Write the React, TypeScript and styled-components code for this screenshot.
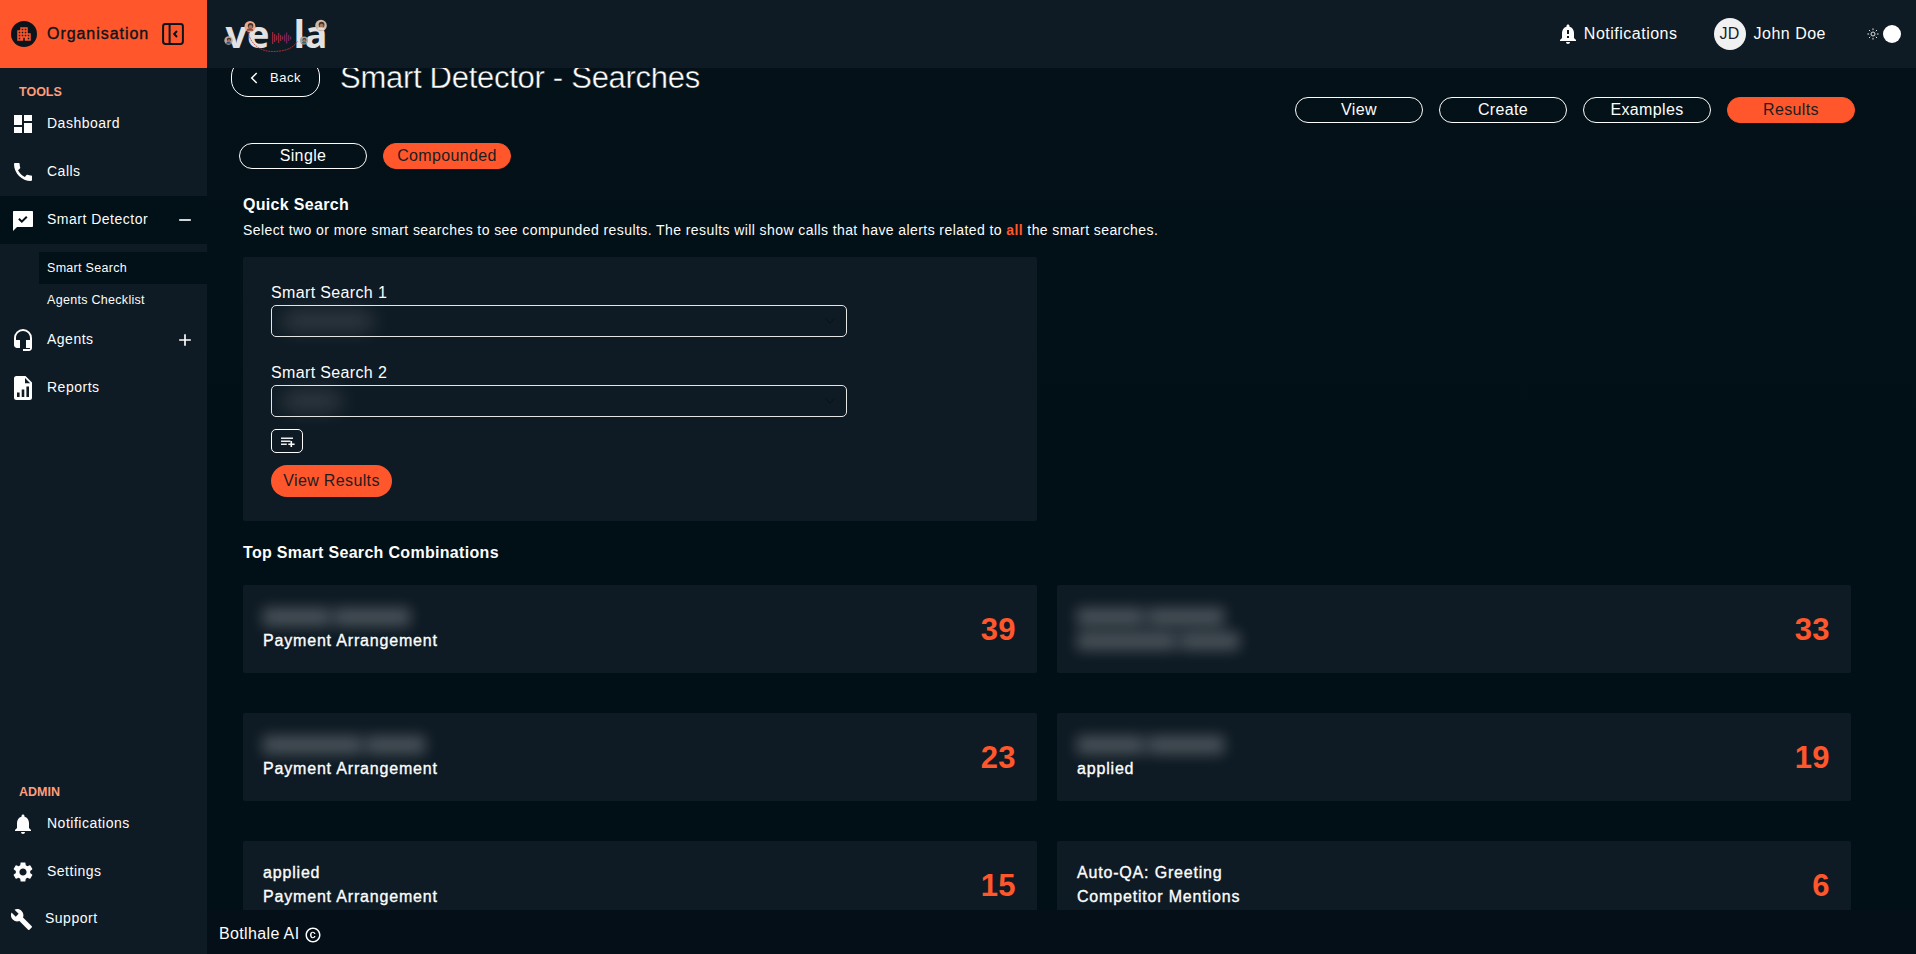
import React from "react";
import styled, { createGlobalStyle } from "styled-components";
import {
  MdAdd,
  MdApartment,
  MdBuild,
  MdCall,
  MdCopyright,
  MdDashboard,
  MdHeadsetMic,
  MdNotificationImportant,
  MdNotifications,
  MdRemove,
  MdSettings,
} from "react-icons/md";

const c = {
  accent: "#ff572b",
  accentSoft: "#ff9d7c",
  page: "#021017",
  panel: "#0f1b24",
  white: "#fdfdfd",
};

const GlobalStyle = createGlobalStyle`
  *, *::before, *::after { box-sizing: border-box; }
  body {
    margin: 0;
    background: ${c.page};
    color: ${c.white};
    font-family: "Liberation Sans", Arial, sans-serif;
    font-size: 16px;
    letter-spacing: 0.36px;
    line-height: 24px;
    overflow: hidden;
  }
  h1, h2, p { margin: 0; }
  button { font: inherit; letter-spacing: inherit; color: inherit; padding: 0; }
  svg { display: block; flex: none; }
`;

const Shell = styled.div`
  display: grid;
  grid-template-columns: 207px 1fr;
  height: 954px;
  overflow: hidden;
`;

const Sidebar = styled.aside`
  display: flex;
  flex-direction: column;
  background: ${c.panel};
  font-size: 14px;
  letter-spacing: 0.5px;
`;

const OrgBar = styled.div`
  display: flex;
  align-items: center;
  height: 68px;
  flex: none;
  padding: 0 23px 1px 11px;
  background: ${c.accent};
  color: #0b141b;
`;

const OrgBadge = styled.span`
  display: grid;
  place-items: center;
  width: 26px;
  height: 26px;
  border-radius: 50%;
  background: #0b141b;
  color: ${c.accent};
`;

const OrgName = styled.span`
  flex: 1;
  padding-left: 10px;
  font-size: 16px;
  letter-spacing: 0.95px;
  -webkit-text-stroke: 0.35px currentColor;
`;

const GroupLabel = styled.div`
  height: 32px;
  padding: 13px 0 0 19px;
  color: ${c.accentSoft};
  font-size: 12.5px;
  font-weight: 700;
  line-height: 23px;
  letter-spacing: 0;
`;

const NavItem = styled.div<{ $active?: boolean }>`
  display: flex;
  align-items: center;
  gap: 12px;
  height: 48px;
  flex: none;
  padding: 0 12px 0 11px;
  background: ${(p) => (p.$active ? c.page : "transparent")};
`;

const SupportItem = styled(NavItem)`
  height: 46px;
  padding-left: 10px;
`;

const NavLabel = styled.span`
  flex: 1;
  padding-bottom: 2px;
`;

const SubNav = styled.div`
  padding: 8px 0 0 39px;
`;

const SubItem = styled.div<{ $active?: boolean }>`
  height: 32px;
  padding-left: 8px;
  font-size: 12.5px;
  line-height: 33px;
  letter-spacing: 0.3px;
  background: ${(p) => (p.$active ? c.page : "transparent")};
`;

const Spacer = styled.div`
  flex: 1;
`;

const AdminGroup = styled.div`
  height: 186px;
`;

const Content = styled.div`
  display: flex;
  flex-direction: column;
  min-width: 0;
  height: 954px;
`;

const TopBar = styled.header`
  display: flex;
  align-items: center;
  height: 68px;
  flex: none;
  padding: 0 15px 0 15px;
  background: ${c.panel};
`;

const TopGroup = styled.div<{ $gap: number; $right: number }>`
  display: flex;
  align-items: center;
  gap: ${(p) => p.$gap}px;
  margin-right: ${(p) => p.$right}px;
  letter-spacing: 0.5px;
`;

const TopText = styled.span`
  padding-bottom: 1px;
`;

const Avatar = styled.span`
  display: grid;
  place-items: center;
  width: 32px;
  height: 32px;
  border-radius: 50%;
  background: #f1f1f1;
  color: #16222b;
  letter-spacing: 0.3px;
`;

const ToggleKnob = styled.span`
  width: 18px;
  height: 18px;
  border-radius: 50%;
  background: #fff;
`;

const Scroller = styled.main`
  height: 842px;
  overflow: hidden;
  background: linear-gradient(#041118, #001016 55%, #001016);
`;

const Page = styled.div`
  margin-top: -9px;
  padding-left: 36px;
  padding-right: 65px;
`;

const TitleRow = styled.div`
  display: flex;
  align-items: center;
  gap: 20px;
  height: 38px;
  margin-left: -12px;
`;

const BackButton = styled.button`
  display: flex;
  align-items: center;
  gap: 12px;
  width: 89px;
  height: 38px;
  padding-left: 18px;
  border: 1px solid ${c.white};
  border-radius: 17px;
  background: transparent;
  font-size: 13px;
  letter-spacing: 0.5px;
`;

const Title = styled.h1`
  font-size: 31px;
  font-weight: 400;
  line-height: 38px;
  letter-spacing: -0.28px;
  -webkit-text-stroke: 0.4px #041118;
`;

const PillRow = styled.div<{ $end?: boolean }>`
  display: flex;
  gap: 16px;
  justify-content: ${(p) => (p.$end ? "flex-end" : "flex-start")};
  margin: ${(p) => (p.$end ? "0 -4px 20px 0" : "0 0 23px -4px")};
`;

const Pill = styled.button<{ $active?: boolean }>`
  width: 128px;
  height: 26px;
  border: 1px solid ${(p) => (p.$active ? c.accent : c.white)};
  border-radius: 13px;
  background: ${(p) => (p.$active ? c.accent : "transparent")};
  color: ${(p) => (p.$active ? "#1c1d20" : c.white)};
  line-height: 22px;
`;

const Heading = styled.h2`
  font-size: 16px;
  font-weight: 700;
  line-height: 25px;
  height: 24px;
  letter-spacing: 0.31px;
`;

const Hint = styled.p`
  margin: 3px 0 16px;
  font-size: 14px;
  line-height: 22px;
  letter-spacing: 0.417px;
  white-space: nowrap;

  b { color: ${c.accent}; }
`;

const SearchCard = styled.section`
  width: 794px;
  height: 264px;
  padding: 23px 28px;
  margin-bottom: 19px;
  border-radius: 2px;
  background: ${c.panel};
`;

const FieldLabel = styled.div`
  height: 25px;
  line-height: 26px;
`;

const Select = styled.div`
  display: flex;
  align-items: center;
  justify-content: space-between;
  width: 576px;
  height: 32px;
  padding: 0 11px 0 12px;
  margin-bottom: 23px;
  border: 1px solid #e4e6e4;
  border-radius: 5px;
  color: #07131a;
`;

const LastSelect = styled(Select)`
  margin-bottom: 12px;
`;

const AddButton = styled.button`
  display: grid;
  place-items: center;
  width: 32px;
  height: 24px;
  margin-bottom: 12px;
  padding: 1px 0 0 1px;
  border: 1px solid ${c.white};
  border-radius: 5px;
  background: transparent;
`;

const ViewResults = styled.button`
  width: 121px;
  height: 32px;
  border: 0;
  border-radius: 16px;
  background: ${c.accent};
  color: #1c1d20;
  line-height: 30px;
`;

const ComboGrid = styled.div`
  display: grid;
  grid-template-columns: repeat(2, 794px);
  grid-auto-rows: 88px;
  gap: 40px 20px;
  margin-top: 21px;
`;

const ComboCard = styled.article`
  display: flex;
  justify-content: space-between;
  align-items: center;
  padding: 1px 21px 0 20px;
  border-radius: 2px;
  background: ${c.panel};
`;

const ComboNames = styled.div`
  display: flex;
  flex-direction: column;
  height: 49px;
  font-size: 16px;
  line-height: 24px;
  letter-spacing: 0.82px;
  -webkit-text-stroke: 0.35px currentColor;
`;

const Count = styled.span`
  color: ${c.accent};
  font-size: 31px;
  font-weight: 700;
  line-height: 37px;
  letter-spacing: 0.4px;
`;

const Redacted = styled.span`
  display: flex;
  align-items: center;
  gap: 4px;
  height: 24px;
  flex: none;
  filter: blur(7px);
`;

const RedactedWord = styled.i<{ $w: number; $soft?: boolean }>`
  width: ${(p) => p.$w}px;
  height: ${(p) => (p.$soft ? 16 : 18)}px;
  background: ${(p) => (p.$soft ? "rgba(255,255,255,0.17)" : "rgba(255,255,255,0.24)")};
`;

const SoftRedacted = styled(Redacted)`
  filter: blur(10px);
`;

const Footer = styled.footer`
  display: flex;
  align-items: center;
  gap: 5px;
  height: 44px;
  flex: none;
  padding: 5px 0 0 12px;
  background: #040f17;
`;

const FooterText = styled.span`
  padding-bottom: 1px;
`;

function CollapseIcon() {
  return (
    <svg width="22" height="22" viewBox="0 0 22 22" fill="none" stroke="currentColor" strokeWidth="2">
      <rect x="1.1" y="1.1" width="19.8" height="19.8" rx="2.4" />
      <path d="M7.6 1v20" />
      <path d="M15 8L12.200 11 15 14" />
    </svg>
  );
}

function ChatCheckIcon() {
  return (
    <svg width="24" height="24" viewBox="0 0 24 24">
      <path fill="#fff" d="M2.800 3h18.400a.8.8 0 0 1 .8.8v14.400a.8.8 0 0 1-.8.8H6l-4 4V3.800a.8.8 0 0 1 .8-.8z" />
      <path fill="none" stroke={c.page} strokeWidth="2" d="M7.900 10.800l2.900 2.900 5-5" />
    </svg>
  );
}

function ReportIcon() {
  return (
    <svg width="24" height="24" viewBox="0 0 24 24">
      <path fill="#fff" d="M5.500 0H14.500L21 6.500v15a2.500 2.500 0 0 1-2.500 2.500h-13A2.500 2.500 0 0 1 3 21.500v-19A2.500 2.500 0 0 1 5.500 0z" />
      <path fill={c.panel} d="M14 2v5.200h5.200zM6 16.500h2.600v4.500H6zM10.700 13.500h2.600v7.500h-2.600zM15.400 10.500h2.600v10.500h-2.600z" />
    </svg>
  );
}

function AddRowIcon() {
  return (
    <svg width="14" height="12" viewBox="0 0 14 12" fill="none" stroke="#e9edef" strokeWidth="1.600">
      <path d="M0 2.200h12M0 5.200h9.500M0 8.200h5.800" />
      <path d="M10.300 5v6M7.300 8.200h6.300" stroke="#fff" />
    </svg>
  );
}

function SunIcon() {
  return (
    <svg width="12" height="12" viewBox="0 0 12 12" fill="none" stroke="#dfe3e5" strokeWidth="1">
      <circle cx="6" cy="6" r="2" />
      <path d="M6 .4v1.700M6 9.900v1.700M.4 6h1.700M9.900 6h1.700M2 2l1.200 1.200M8.800 8.800L10 10M2 10l1.200-1.200M8.800 3.200L10 2" />
    </svg>
  );
}

function ChevronIcon({ dir, color }: { dir: "left" | "down"; color: string }) {
  return dir === "left" ? (
    <svg width="8" height="12" viewBox="0 0 8 12" fill="none" stroke={color} strokeWidth="1.500">
      <path d="M6.700 1L1.700 6l5 5" />
    </svg>
  ) : (
    <svg width="10" height="8" viewBox="0 0 10 8" fill="none" stroke={color} strokeWidth="1">
      <path d="M.5 1L5 6.500 9.500 1" />
    </svg>
  );
}

const LogoSvg = styled.svg`
  overflow: visible;
`;

const LogoText = styled.text`
  font-family: "Open Sans", sans-serif;
  font-size: 38px;
  font-weight: 700;
  letter-spacing: 0;
  fill: #e2e2e2;
`;

function Portrait({ x, y, r, ring, coat }: { x: number; y: number; r: number; ring: string; coat: string }) {
  return (
    <g transform={`translate(${x} ${y})`}>
      <circle r={r} fill={ring} />
      <circle cx={r * 0.1} cy={-r * 0.15} r={r * 0.5} fill="#4a332b" />
      <circle cx={r * 0.1} cy={r * 0.05} r={r * 0.34} fill="#a87860" />
      <path d={`M${-r * 0.6} ${r * 0.75}a${r * 0.6} ${r * 0.45} 0 0 1 ${r * 1.2} 0z`} fill={coat} />
    </g>
  );
}

function Logo() {
  const bars = [12, 8, 5, 10, 6, 3, 7, 11, 6, 3];
  return (
    <LogoSvg width="108" height="44" viewBox="0 0 108 44">
      <LogoText x="3.500" y="36">ve</LogoText>
      <LogoText x="71.500" y="36" textLength="34">la</LogoText>
      {bars.map((h, i) => (
        <rect key={i} x={50 + i * 2} y={26 - h / 2} width="1.300" height={h} fill={i < 6 ? "#8f2a3c" : "#6b2658"} />
      ))}
      <path d="M26 20C28 30 36 40 52 39.500S72 34 76 29" fill="none" stroke="#c23a34" strokeWidth="0.800" strokeDasharray="2 0.700" />
      <Portrait x={28} y={14.500} r={5.500} ring="#e9a98c" coat="#8a4a3a" />
      <Portrait x={6.500} y={28.500} r={4.200} ring="#b9a79c" coat="#2d4f86" />
      <Portrait x={99} y={13.500} r={5.800} ring="#cdb9a8" coat="#e5e0da" />
      <Portrait x={82} y={28.500} r={4} ring="#9ea7a2" coat="#35636a" />
    </LogoSvg>
  );
}

type Line = string | number[];

const combos: { lines: Line[]; count: number }[] = [
  { lines: [[67, 76], "Payment Arrangement"], count: 39 },
  { lines: [[67, 76], [99, 59]], count: 33 },
  { lines: [[99, 59], "Payment Arrangement"], count: 23 },
  { lines: [[67, 76], "applied"], count: 19 },
  { lines: ["applied", "Payment Arrangement"], count: 15 },
  { lines: ["Auto-QA: Greeting", "Competitor Mentions"], count: 6 },
];

export default function App() {
  return (
    <>
      <GlobalStyle />
      <Shell>
        <Sidebar>
          <OrgBar>
            <OrgBadge>
              <MdApartment size={18} />
            </OrgBadge>
            <OrgName>Organisation</OrgName>
            <CollapseIcon />
          </OrgBar>
          <GroupLabel>TOOLS</GroupLabel>
          <NavItem><MdDashboard size={24} /><NavLabel>Dashboard</NavLabel></NavItem>
          <NavItem><MdCall size={24} /><NavLabel>Calls</NavLabel></NavItem>
          <NavItem $active><ChatCheckIcon /><NavLabel>Smart Detector</NavLabel><MdRemove size={20} /></NavItem>
          <SubNav>
            <SubItem $active>Smart Search</SubItem>
            <SubItem>Agents Checklist</SubItem>
          </SubNav>
          <NavItem><MdHeadsetMic size={24} /><NavLabel>Agents</NavLabel><MdAdd size={20} /></NavItem>
          <NavItem><ReportIcon /><NavLabel>Reports</NavLabel></NavItem>
          <Spacer />
          <AdminGroup>
            <GroupLabel>ADMIN</GroupLabel>
            <NavItem><MdNotifications size={24} /><NavLabel>Notifications</NavLabel></NavItem>
            <NavItem><MdSettings size={24} /><NavLabel>Settings</NavLabel></NavItem>
            <SupportItem><MdBuild size={23} /><NavLabel>Support</NavLabel></SupportItem>
          </AdminGroup>
        </Sidebar>

        <Content>
          <TopBar>
            <Logo />
            <Spacer />
            <TopGroup $gap={4} $right={36}>
              <MdNotificationImportant size={24} />
              <TopText>Notifications</TopText>
            </TopGroup>
            <TopGroup $gap={8} $right={41}>
              <Avatar>JD</Avatar>
              <TopText>John Doe</TopText>
            </TopGroup>
            <TopGroup $gap={4} $right={0}>
              <SunIcon />
              <ToggleKnob />
            </TopGroup>
          </TopBar>

          <Scroller>
            <Page>
              <TitleRow>
                <BackButton><ChevronIcon dir="left" color="#fff" />Back</BackButton>
                <Title>Smart Detector - Searches</Title>
              </TitleRow>
              <PillRow $end>
                <Pill>View</Pill>
                <Pill>Create</Pill>
                <Pill>Examples</Pill>
                <Pill $active>Results</Pill>
              </PillRow>
              <PillRow>
                <Pill>Single</Pill>
                <Pill $active>Compounded</Pill>
              </PillRow>

              <Heading>Quick Search</Heading>
              <Hint>
                Select two or more smart searches to see compunded results. The results will show calls that have
                alerts related to <b>all</b> the smart searches.
              </Hint>

              <SearchCard>
                <FieldLabel>Smart Search 1</FieldLabel>
                <Select>
                  <SoftRedacted><RedactedWord $w={88} $soft /></SoftRedacted>
                  <ChevronIcon dir="down" color="#07131a" />
                </Select>
                <FieldLabel>Smart Search 2</FieldLabel>
                <LastSelect>
                  <SoftRedacted><RedactedWord $w={56} $soft /></SoftRedacted>
                  <ChevronIcon dir="down" color="#07131a" />
                </LastSelect>
                <AddButton><AddRowIcon /></AddButton>
                <ViewResults>View Results</ViewResults>
              </SearchCard>

              <Heading>Top Smart Search Combinations</Heading>
              <ComboGrid>
                {combos.map((combo) => (
                  <ComboCard key={combo.count}>
                    <ComboNames>
                      {combo.lines.map((line, i) =>
                        typeof line === "string" ? (
                          <span key={i}>{line}</span>
                        ) : (
                          <Redacted key={i}>
                            {line.map((w) => <RedactedWord key={w} $w={w} />)}
                          </Redacted>
                        )
                      )}
                    </ComboNames>
                    <Count>{combo.count}</Count>
                  </ComboCard>
                ))}
              </ComboGrid>
            </Page>
          </Scroller>
          <Footer>
            <FooterText>Botlhale AI</FooterText>
            <MdCopyright size={18} />
          </Footer>
        </Content>
      </Shell>
    </>
  );
}
